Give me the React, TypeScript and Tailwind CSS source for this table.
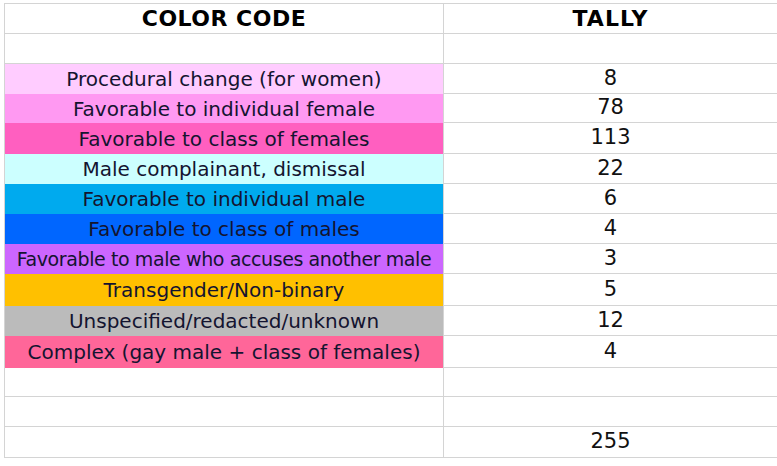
import React from 'react'

const rows = [
  { label: 'Procedural change (for women)', tally: '8', color: 'bg-[#ffccff]', h: 'h-[30px]' },
  { label: 'Favorable to individual female', tally: '78', color: 'bg-[#ff99f2]', h: 'h-[29px]' },
  { label: 'Favorable to class of females', tally: '113', color: 'bg-[#ff5fc0]', h: 'h-[31px]' },
  { label: 'Male complainant, dismissal', tally: '22', color: 'bg-[#ccffff]', h: 'h-[30px]' },
  { label: 'Favorable to individual male', tally: '6', color: 'bg-[#00aaee]', h: 'h-[30px]' },
  { label: 'Favorable to class of males', tally: '4', color: 'bg-[#0066ff]', h: 'h-[30px]' },
  { label: 'Favorable to male who accuses another male', tally: '3', color: 'bg-[#cc66ff]', h: 'h-[30px]', tight: true },
  { label: 'Transgender/Non-binary', tally: '5', color: 'bg-[#ffc000]', h: 'h-[32px]' },
  { label: 'Unspecified/redacted/unknown', tally: '12', color: 'bg-[#bbbbbb]', h: 'h-[30px]' },
  { label: 'Complex (gay male + class of females)', tally: '4', color: 'bg-[#ff6699]', h: 'h-[32px]' },
]

const font = { fontFamily: '"DejaVu Sans", Verdana, sans-serif' }

function Row({
  left,
  right,
  h,
  color,
  bold,
  tight,
}: {
  left?: string
  right?: string
  h: string
  color?: string
  bold?: boolean
  tight?: boolean
}) {
  return (
    <div className={`flex ${h}`}>
      <div
        className={`w-[439px] shrink-0 flex items-center justify-center overflow-hidden whitespace-nowrap border-r border-[#d4d4d4] ${
          color ? color : 'border-b border-b-[#d4d4d4]'
        } ${
          bold
            ? 'font-bold text-black text-[22px] tracking-[0.5px]'
            : tight
              ? 'text-[#141430] text-[19px] tracking-[-0.4px]'
              : 'text-[#141430] text-[20px]'
        }`}
      >
        {left}
      </div>
      <div
        className={`flex-1 flex items-center justify-center border-b border-[#d4d4d4] ${
          bold ? 'font-bold text-black text-[22px] tracking-[1px]' : 'text-[#111] text-[21px]'
        }`}
      >
        {right}
      </div>
    </div>
  )
}

export default function App() {
  return (
    <div className="w-[777px] h-[466px] bg-white overflow-hidden pt-[3px]" style={font}>
      <div className="flex">
        <div className="w-[5px] shrink-0 border-r border-[#d4d4d4]" />
        <div className="flex-1 border-t border-[#d4d4d4]">
          <Row left="COLOR CODE" right="TALLY" h="h-[30px]" bold />
          <Row h="h-[30px]" />
          {rows.map((r) => (
            <Row key={r.label} left={r.label} right={r.tally} h={r.h} color={r.color} tight={r.tight} />
          ))}
          <Row h="h-[29px]" />
          <Row h="h-[30px]" />
          <Row right="255" h="h-[31px]" />
        </div>
      </div>
    </div>
  )
}
